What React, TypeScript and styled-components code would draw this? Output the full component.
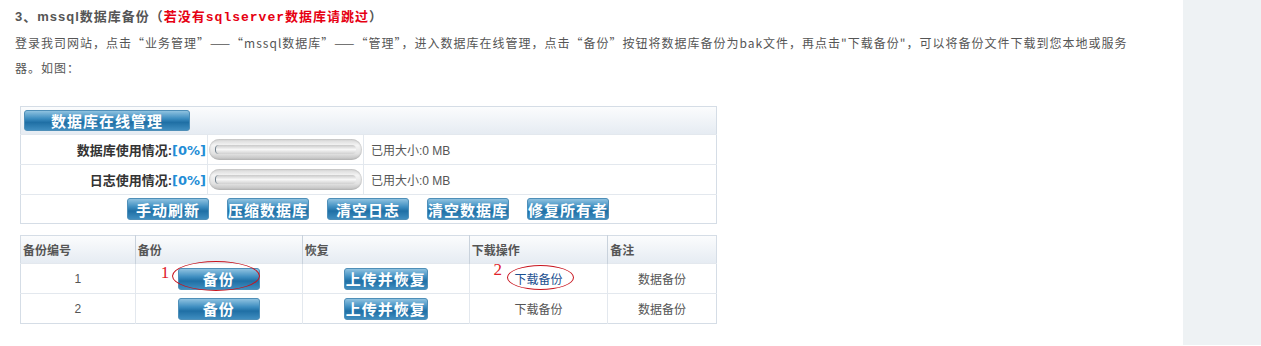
import * as React from "react";
import styled, { createGlobalStyle } from "styled-components";

const GlobalStyle = createGlobalStyle`
    html, body {
        margin: 0;
        padding: 0;
        background: #ffffff;
    }
    body {
        font-family: "Liberation Sans", "Noto Sans CJK SC", sans-serif;
    }
`;

const SPage = styled.div`
    display: flex;
    width: 1261px;
    height: 346px;
    overflow: hidden;
`;

const SContent = styled.div`
    flex: 1;
    padding: 4px 0 0 15px;
    color: #555;
    font-size: 13px;
`;

const SSide = styled.div`
    width: 78px;
    height: 345px;
    background: #eef2f4;
`;

const SHeading = styled.div`
    font-weight: bold;
    line-height: 25px;
    color: #555;
    font-size: 13px;
    letter-spacing: 1px;
`;

const SRed = styled.span`
    color: #e60012;
    font-family: "Liberation Mono", "Noto Sans CJK SC", monospace;
`;

const SPara = styled.p`
    margin: 0;
    line-height: 25px;
    width: 1135px;
    font-size: 12px;
    letter-spacing: 1px;
    font-family: "Noto Sans CJK SC", sans-serif;
`;

const SFigure = styled.div`
    margin: 26px 0 0 5px;
    width: 697px;
    display: flex;
    flex-direction: column;
    gap: 11px;
`;

const STable = styled.table`
    width: 697px;
    border-collapse: collapse;
    border: 1px solid #d5dde6;
    font-size: 12px;
    color: #555;
`;

const SHeadRow = styled.tr`
    height: 28px;
    background: linear-gradient(#fbfcfd, #e5ebf2);
`;

const SRow = styled.tr<{ $h: number }>`
    height: ${({ $h }) => $h}px;
    border-top: 1px solid #e3e8ee;
`;

const SCell = styled.td<{ $w?: number; $align?: string }>`
    padding: 0;
    ${({ $w }) => ($w ? `width: ${$w}px;` : "")}
    text-align: ${({ $align }) => $align || "left"};
    border-left: 1px solid #e3e8ee;
    &:first-child {
        border-left: none;
    }
`;

const SHeadCell = styled.th<{ $w: number }>`
    padding: 0 0 0 2px;
    width: ${({ $w }) => $w}px;
    text-align: left;
    font-weight: bold;
    color: #555;
    border-left: 1px solid #c9d2dc;
    &:first-child {
        border-left: none;
    }
`;

const SLabel = styled.span`
    font-weight: bold;
    font-size: 13px;
    color: #333;
    padding-right: 1px;
`;

const SPercent = styled.span`
    color: #1f8dd6;
    font-family: "DejaVu Sans", "Noto Sans CJK SC", sans-serif;
`;

const SBar = styled.div`
    margin-left: 1px;
    width: 153px;
    height: 21px;
    border-radius: 11px;
    background: linear-gradient(#d6d6d6, #f4f4f4 30%, #e2e2e2 70%, #bdbdbd);
    box-shadow: inset 0 0 2px #9c9c9c;
    display: flex;
    align-items: center;
    padding: 0 6px;
    box-sizing: border-box;
`;

const SBarTrack = styled.div`
    flex: 1;
    height: 9px;
    border-radius: 4px;
    background: linear-gradient(#c9c9c9, #f7f7f7 50%, #d0d0d0);
    border-left: 1px solid #6f7f8c;
`;

const SSize = styled.span`
    padding-left: 7px;
    color: #555;
`;

const SButton = styled.span<{ $w?: number; $h?: number }>`
    display: inline-flex;
    align-items: center;
    justify-content: center;
    width: ${({ $w }) => $w || 82}px;
    height: ${({ $h }) => $h || 22}px;
    box-sizing: border-box;
    border: 1px solid #4f8fb8;
    border-radius: 3px;
    background: linear-gradient(#8fc2e0, #3d8dc0 40%, #1f6fa5 60%, #3f8dbf);
    color: #fff;
    font-weight: bold;
    font-size: 15px;
    letter-spacing: 1px;
    font-family: "Noto Sans CJK SC", sans-serif;
`;

const SButtonBar = styled.div`
    display: flex;
    gap: 18px;
    padding-left: 106px;
    align-items: center;
`;

const SMark = styled.span`
    position: relative;
    display: inline-block;
`;

const SEllipse = styled.span<{ $l: number; $t: number; $w: number; $h: number }>`
    position: absolute;
    left: ${({ $l }) => $l}px;
    top: ${({ $t }) => $t}px;
    width: ${({ $w }) => $w}px;
    height: ${({ $h }) => $h}px;
    border: 1px solid #c8141e;
    border-radius: 50%;
    pointer-events: none;
`;

const SNumber = styled.span<{ $l: number; $t: number }>`
    position: absolute;
    left: ${({ $l }) => $l}px;
    top: ${({ $t }) => $t}px;
    color: #e0202a;
    font-family: "Liberation Serif", serif;
    font-size: 17px;
`;

const SLink = styled.span`
    color: #1a4f8f;
`;

const usage = [
    { label: "数据库使用情况:", h: 30 },
    { label: "日志使用情况:", h: 30 },
];

const tools = ["手动刷新", "压缩数据库", "清空日志", "清空数据库", "修复所有者"];

export default function App() {
    return (
        <>
            <GlobalStyle />
            <SPage>
                <SContent>
                    <SHeading>
                        3、mssql数据库备份（<SRed>若没有sqlserver数据库请跳过</SRed>）
                    </SHeading>
                    <SPara>
                        登录我司网站，点击“业务管理”——“mssql数据库”——“管理”，进入数据库在线管理，点击“备份”按钮将数据库备份为bak文件，再点击"下载备份"，可以将备份文件下载到您本地或服务器。如图：
                    </SPara>
                    <SFigure>
                        <STable>
                            <tbody>
                                <SHeadRow>
                                    <SCell colSpan={3} style={{ paddingLeft: 3 }}>
                                        <SButton $w={166} $h={21}>数据库在线管理</SButton>
                                    </SCell>
                                </SHeadRow>
                                {usage.map((u) => (
                                    <SRow $h={u.h} key={u.label}>
                                        <SCell $w={186} $align="right">
                                            <SLabel>
                                                {u.label}
                                                <SPercent>[0%]</SPercent>
                                            </SLabel>
                                        </SCell>
                                        <SCell $w={155}>
                                            <SBar>
                                                <SBarTrack />
                                            </SBar>
                                        </SCell>
                                        <SCell>
                                            <SSize>已用大小:0 MB</SSize>
                                        </SCell>
                                    </SRow>
                                ))}
                                <SRow $h={29}>
                                    <SCell colSpan={3}>
                                        <SButtonBar>
                                            {tools.map((t) => (
                                                <SButton key={t}>{t}</SButton>
                                            ))}
                                        </SButtonBar>
                                    </SCell>
                                </SRow>
                            </tbody>
                        </STable>

                        <STable>
                            <tbody>
                                <SHeadRow>
                                    <SHeadCell $w={113}>备份编号</SHeadCell>
                                    <SHeadCell $w={165}>备份</SHeadCell>
                                    <SHeadCell $w={165}>恢复</SHeadCell>
                                    <SHeadCell $w={137}>下载操作</SHeadCell>
                                    <SHeadCell $w={107}>备注</SHeadCell>
                                </SHeadRow>
                                {[1, 2].map((n) => (
                                    <SRow $h={30} key={n}>
                                        <SCell $align="center">{n}</SCell>
                                        <SCell $align="center">
                                            <SMark>
                                                <SButton>备份</SButton>
                                                {n === 1 && (
                                                    <>
                                                        <SEllipse $l={-6} $t={-7} $w={86} $h={28} />
                                                        <SNumber $l={-17} $t={-5}>1</SNumber>
                                                    </>
                                                )}
                                            </SMark>
                                        </SCell>
                                        <SCell $align="center">
                                            <SButton $w={84}>上传并恢复</SButton>
                                        </SCell>
                                        <SCell $align="center">
                                            {n === 1 ? (
                                                <SMark>
                                                    <SLink>下载备份</SLink>
                                                    <SEllipse $l={-7} $t={-5} $w={65} $h={23} />
                                                    <SNumber $l={-21} $t={-10}>2</SNumber>
                                                </SMark>
                                            ) : (
                                                "下载备份"
                                            )}
                                        </SCell>
                                        <SCell $align="center">数据备份</SCell>
                                    </SRow>
                                ))}
                            </tbody>
                        </STable>
                    </SFigure>
                </SContent>
                <SSide />
            </SPage>
        </>
    );
}
